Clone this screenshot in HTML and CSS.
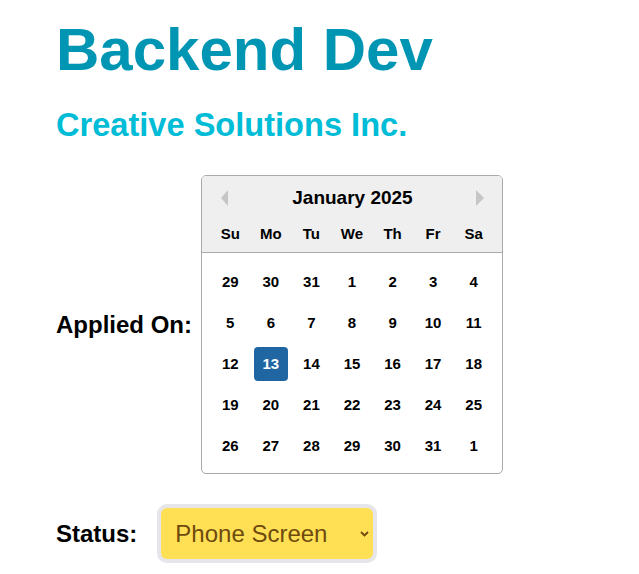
FILE: index.html
```html
<!DOCTYPE html>
<html lang="en">
<head>
<meta charset="utf-8">
<title>Backend Dev</title>
<link rel="stylesheet" href="styles.css">
</head>
<body>
  <h1 class="title">Backend Dev</h1>
  <h2 class="company">Creative Solutions Inc.</h2>

  <div class="field field-date">
    <label class="field-label">Applied On:</label>
    <div class="calendar">
      <div class="cal-header">
        <div class="cal-title-row">
          <span class="cal-nav">
            <svg width="7" height="16" viewBox="0 0 7 16"><polygon points="7,0 0,8 7,16" fill="#c6c6c6"/></svg>
          </span>
          <span class="cal-title">January 2025</span>
          <span class="cal-nav">
            <svg width="8" height="16" viewBox="0 0 8 16"><polygon points="0,0 8,8 0,16" fill="#c6c6c6"/></svg>
          </span>
        </div>
        <div class="cal-weekdays">
          <span>Su</span><span>Mo</span><span>Tu</span><span>We</span><span>Th</span><span>Fr</span><span>Sa</span>
        </div>
      </div>
      <div class="cal-days">
        <span>29</span><span>30</span><span>31</span><span>1</span><span>2</span><span>3</span><span>4</span>
        <span>5</span><span>6</span><span>7</span><span>8</span><span>9</span><span>10</span><span>11</span>
        <span>12</span><span class="selected"><b>13</b></span><span>14</span><span>15</span><span>16</span><span>17</span><span>18</span>
        <span>19</span><span>20</span><span>21</span><span>22</span><span>23</span><span>24</span><span>25</span>
        <span>26</span><span>27</span><span>28</span><span>29</span><span>30</span><span>31</span><span>1</span>
      </div>
    </div>
  </div>

  <div class="field field-status">
    <label class="field-label" for="status">Status:</label>
    <div class="select-wrap">
      <select id="status" class="status-select">
        <option>Phone Screen</option>
      </select>
      <svg class="select-chevron" width="9" height="6" viewBox="0 0 9 6"><polyline points="1,1 4.5,4.5 8,1" fill="none" stroke="#6e4a0e" stroke-width="1.8"/></svg>
    </div>
  </div>
</body>
</html>
```

FILE: styles.css
```css
* { box-sizing: border-box; }

body {
  margin: 0;
  padding: 20px 0 0 56px;
  font-family: "Liberation Sans", Arial, sans-serif;
  background: #fff;
  color: #000;
}

.title {
  margin: 0;
  font-size: 60px;
  line-height: 60px;
  font-weight: 700;
  color: #0096b3;
}

.company {
  margin: 29px 0 0;
  font-size: 32.6px;
  line-height: 32px;
  font-weight: 700;
  color: #00bcd6;
}

.field {
  display: flex;
  align-items: center;
}

.field-label {
  font-size: 24px;
  font-weight: 700;
}

.field-date {
  margin-top: 34px;
}

.field-date .field-label {
  margin-right: 9px;
}

.calendar {
  width: 302px;
  border: 1px solid #aaaaaa;
  border-radius: 5px;
  overflow: hidden;
  background: #fff;
}

.cal-header {
  background: #efefef;
  border-bottom: 1px solid #aaaaaa;
  padding: 0 8px 6px;
}

.cal-title-row {
  height: 44px;
  display: flex;
  align-items: center;
  justify-content: space-between;
  padding: 0 10px 0 11px;
}

.cal-nav {
  display: flex;
  width: 8px;
}

.cal-title {
  font-size: 19px;
  font-weight: 700;
}

.cal-weekdays {
  height: 26px;
  display: grid;
  grid-template-columns: repeat(7, 1fr);
  align-items: center;
  text-align: center;
  font-size: 15px;
  font-weight: 700;
}

.cal-days {
  padding: 8px 8px 7px;
  display: grid;
  grid-template-columns: repeat(7, 1fr);
  grid-auto-rows: 41px;
  font-size: 15px;
  font-weight: 700;
}

.cal-days span {
  display: flex;
  align-items: center;
  justify-content: center;
}

.cal-days .selected b {
  display: flex;
  align-items: center;
  justify-content: center;
  width: 34px;
  height: 34px;
  border-radius: 4px;
  background: #1f66a3;
  color: #fff;
}

.field-status {
  margin-top: 30px;
}

.field-status .field-label {
  margin-right: 20px;
}

.select-wrap {
  position: relative;
  display: flex;
}

.status-select {
  appearance: none;
  -webkit-appearance: none;
  width: 220px;
  height: 59px;
  margin: 0;
  padding: 0 30px 0 14px;
  border: 4px solid #e5e5ea;
  border-radius: 10px;
  background: #ffe055;
  color: #6e4a0e;
  font-family: "Liberation Sans", Arial, sans-serif;
  font-size: 24px;
  outline: none;
}

.select-chevron {
  position: absolute;
  right: 8px;
  top: 27px;
  pointer-events: none;
}
```
